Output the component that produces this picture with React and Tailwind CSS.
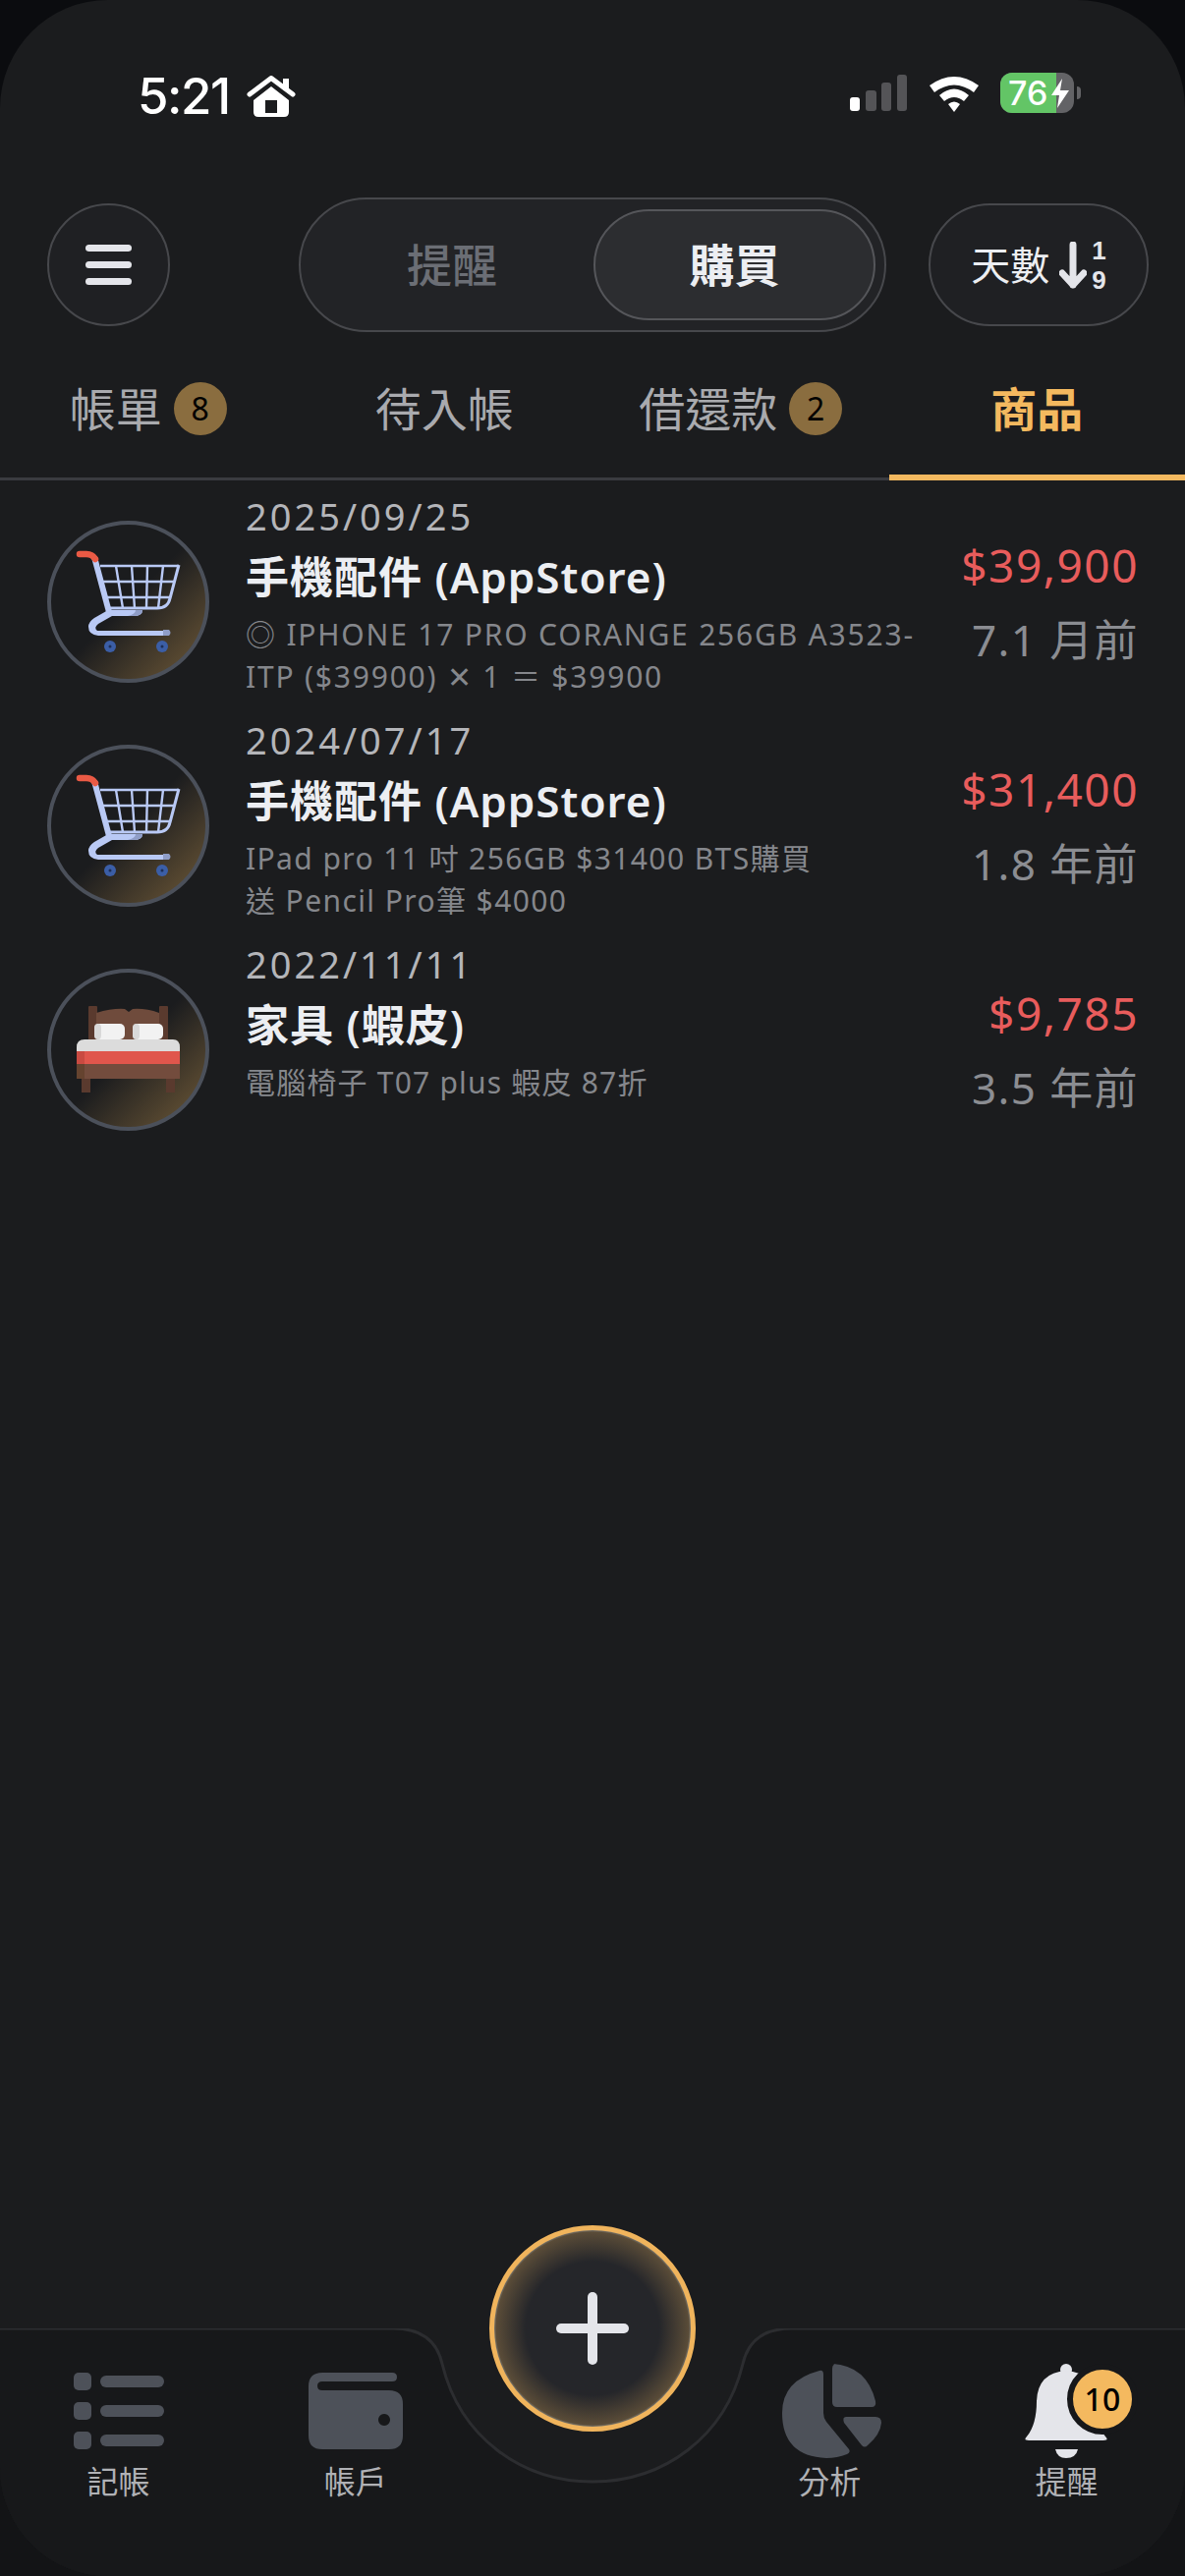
import React from 'react';

const FONT = "font-['Noto_Sans','Noto_Sans_CJK_TC',sans-serif]";

const ITEMS = [
  {
    date: '2025/09/25',
    title: '手機配件 (AppStore)',
    desc: ['◎ IPHONE 17 PRO CORANGE 256GB A3523-', 'ITP ($39900) ✕ 1 ＝ $39900'],
    descClass: 'tracking-[1.8px]',
    price: '$39,900',
    age: '7.1 月前',
    icon: 'cart',
  },
  {
    date: '2024/07/17',
    title: '手機配件 (AppStore)',
    desc: ['IPad pro 11 吋 256GB $31400 BTS購買', '送 Pencil Pro筆 $4000'],
    descClass: 'tracking-[1.4px]',
    price: '$31,400',
    age: '1.8 年前',
    icon: 'cart',
  },
  {
    date: '2022/11/11',
    title: '家具 (蝦皮)',
    desc: ['電腦椅子 T07 plus 蝦皮 87折'],
    descClass: 'tracking-[1.2px]',
    price: '$9,785',
    age: '3.5 年前',
    icon: 'bed',
  },
];

const CartIcon = () => (
  <svg viewBox="18 19 165 165" className="absolute inset-0 h-full w-full">
    <g fill="none" stroke="#b9c9f5" strokeWidth="2.4">
      <path d="M72 65H152M74 81H148M77 97H144" />
      <path d="M88 65L95 108M104 65L107 108M120 65L119 108M136 65L131 108" />
      <path d="M152 64L143 98Q141 108 130 108H80" strokeWidth="3" />
    </g>
    <path d="M66 56L81 112" fill="none" stroke="#b9c9f5" strokeWidth="6" />
    <path d="M51 53H58Q64 53 67 58" fill="none" stroke="#ea5a45" strokeWidth="6.5" strokeLinecap="round" />
    <path d="M80 110H115Q115 116 106 116H84L70 124Q65 128 69 131H140V136H70Q60 135 60 127Q60 122 66 118Z" fill="#b9c9f5" />
    <path d="M100 116H106Q115 116 115 110H108Q108 114 100 116Z" fill="#8f9dc7" />
    <path d="M136 130H142Q145 133 142 136H136Z" fill="#8f9dc7" />
    <circle cx="82" cy="147" r="6" fill="#3b5ea6" />
    <circle cx="135" cy="147" r="6" fill="#3b5ea6" />
    <circle cx="82" cy="147" r="1.5" fill="#1d2f57" />
    <circle cx="135" cy="147" r="1.5" fill="#1d2f57" />
  </svg>
);

const BedIcon = () => (
  <svg viewBox="18 16 165 165" className="absolute inset-0 h-full w-full">
    <rect x="60" y="54" width="9" height="36" rx="1" fill="#5a3a2e" />
    <rect x="132" y="54" width="9" height="36" rx="1" fill="#5a3a2e" />
    <path d="M68 61Q85 56 97 57L101 60L105 57Q118 56 132 61V90H68Z" fill="#6f4b3c" />
    <rect x="53" y="126" width="9" height="16" fill="#5a3a2e" />
    <rect x="139" y="126" width="9" height="16" fill="#5a3a2e" />
    <rect x="66" y="72" width="31" height="16" rx="5" fill="#f2f2f2" />
    <rect x="105" y="72" width="31" height="16" rx="5" fill="#f2f2f2" />
    <rect x="66" y="72" width="7" height="16" rx="4" fill="#d9d9d9" />
    <rect x="105" y="72" width="7" height="16" rx="4" fill="#d9d9d9" />
    <path d="M48 100V96Q48 88 56 88H146Q153 88 153 96V100Z" fill="#dcdcdc" />
    <rect x="48" y="100" width="105" height="13" fill="#e0564c" />
    <rect x="48" y="113" width="105" height="15" fill="#734c3d" />
    <rect x="48" y="100" width="8" height="13" fill="#c94a41" />
    <rect x="48" y="113" width="8" height="15" fill="#65432f" />
  </svg>
);

const StatusBar = () => (
  <div className="flex h-[201px] items-start justify-between pl-[140px] pr-[106px] pt-[74px]">
    <div className="flex items-center gap-[17px]">
      <span className="text-[51px] leading-[48px] font-medium tracking-[-1.5px] text-white font-['Inter',sans-serif]">5:21</span>
      <svg width="50" height="42" viewBox="0 0 50 42">
        <rect x="37" y="3" width="6" height="12" fill="#fff" />
        <path d="M3 19L25 2.5L47 19" fill="none" stroke="#fff" strokeWidth="5" strokeLinecap="round" strokeLinejoin="round" />
        <path fillRule="evenodd" d="M25 11L43 25V37Q43 42 38 42H12Q7 42 7 37V25ZM19 25V38H31V25Z" fill="#fff" />
      </svg>
    </div>
    <div className="flex items-center">
      <svg width="58" height="37" viewBox="0 0 58 37">
        <rect x="0" y="23" width="10" height="14" rx="3" fill="#fff" />
        <rect x="16" y="16" width="11" height="21" rx="3" fill="#545457" />
        <rect x="32" y="8" width="10" height="29" rx="3" fill="#545457" />
        <rect x="48" y="0" width="10" height="37" rx="3" fill="#545457" />
      </svg>
      <svg width="50" height="38" viewBox="0 0 50 38" className="ml-[23px]">
        <path d="M0 11Q25 -7 50 11L45 18Q25 3 5 18Z" fill="#fff" />
        <path d="M10 21Q25 8 40 21L35 27Q25 19 15 27Z" fill="#fff" />
        <path d="M19 30Q25 25 31 30L25 38Z" fill="#fff" />
      </svg>
      <div className="relative ml-[22px] flex h-[41px] w-[75px] items-center overflow-hidden rounded-[12px] bg-[#636366]">
        <div className="flex h-full w-[57px] items-center bg-[#63c566] pl-[8px] text-[34px] leading-none font-medium text-white font-['Inter',sans-serif]">76</div>
        <svg width="18" height="30" viewBox="0 0 18 30" className="absolute left-[52px] top-[6px]">
          <path d="M11 0L0 17H8L6 30L18 12H9Z" fill="#fff" />
        </svg>
      </div>
      <div className="ml-[3px] h-[13px] w-[4px] rounded-r-full bg-[#636366]" />
    </div>
  </div>
);

const TopControls = () => (
  <div className="flex h-[137px] items-center pl-[48px]">
    <div className="flex h-[125px] w-[125px] flex-col items-center justify-center gap-[10px] rounded-full border-2 border-[#47484c] bg-[#1f2023]">
      <div className="h-[7px] w-[47px] rounded-full bg-[#e4e5ea]" />
      <div className="h-[7px] w-[47px] rounded-full bg-[#e4e5ea]" />
      <div className="h-[7px] w-[47px] rounded-full bg-[#e4e5ea]" />
    </div>
    <div className="ml-[131px] flex h-[137px] w-[598px] items-center rounded-full border-2 border-[#47484c] bg-[#222326] pl-[10px] pr-[9px]">
      <div className="flex-1 text-center text-[46px] font-medium text-[#6b6e75]">提醒</div>
      <div className="flex h-[113px] w-[287px] items-center justify-center rounded-full border-2 border-[#55565a] bg-[#2c2d30] text-[46px] font-bold text-[#eceef2]">購買</div>
    </div>
    <div className="ml-[43px] flex h-[125px] w-[224px] items-center justify-center rounded-full border-2 border-[#47484c] bg-[#1f2023]">
      <span className="text-[40px] leading-none text-[#eceef2]">天數</span>
      <svg width="28" height="48" viewBox="0 0 28 48" className="ml-[10px]">
        <path d="M14 3V44M3 32L14 44L25 32" fill="none" stroke="#e4e5ea" strokeWidth="7" strokeLinecap="round" strokeLinejoin="round" />
      </svg>
      <div className="ml-[5px] flex flex-col items-center text-[26px] leading-[30px] font-bold text-[#e4e5ea] font-['Liberation_Sans',sans-serif]">
        <span>1</span>
        <span>9</span>
      </div>
    </div>
  </div>
);

const Badge = ({ n }) => (
  <span className="ml-[12px] flex h-[54px] w-[54px] items-center justify-center rounded-full bg-[#8a6d3f] text-[32px] leading-none text-black">{n}</span>
);

const Tabs = () => (
  <div className="mt-[8px] grid h-[143px] grid-cols-4 border-b-[3px] border-[#3a3b40]">
    <div className="flex items-center justify-center text-[47px] text-[#a9aaae]">帳單<Badge n="8" /></div>
    <div className="flex items-center justify-center text-[47px] text-[#a9aaae]">待入帳</div>
    <div className="flex items-center justify-center text-[47px] text-[#a9aaae]">借還款<Badge n="2" /></div>
    <div className="relative flex items-center justify-center text-[47px] font-bold text-[#f4b95f]">
      商品
      <div className="absolute -bottom-[3px] left-0 right-0 h-[6px] bg-[#f4b95f]" />
    </div>
  </div>
);

const Row = ({ item }) => (
  <div className="flex h-[228px]">
    <div className="w-[250px] shrink-0 pl-[48px] pt-[27px]">
      <div className="relative h-[165px] w-[165px] rounded-full border-[4px] border-[#4b505a] bg-linear-to-br from-transparent from-50% to-[#705a38]">
        <div className="absolute -inset-[4px]">{item.icon === 'cart' ? <CartIcon /> : <BedIcon />}</div>
      </div>
    </div>
    <div className="flex-1">
      <div className="h-[47px] text-[38px] leading-[44px] tracking-[3px] text-[#b4b5b9]">{item.date}</div>
      <div className="mt-[5px] h-[64px] text-[44px] leading-[64px] tracking-[1px] font-semibold text-[#eceef2]">{item.title}</div>
      <div className={`mt-[5px] text-[30px] leading-[43px] text-[#85878c] ${item.descClass}`}>
        {item.desc.map((line) => (
          <div key={line} className="whitespace-nowrap">{line}</div>
        ))}
      </div>
    </div>
    <div className="flex w-[200px] shrink-0 flex-col items-end pr-[47px] pt-[41px]">
      <div className="h-[62px] text-[46px] leading-[62px] tracking-[1.5px] text-[#e85c5c] whitespace-nowrap">{item.price}</div>
      <div className="mt-[14px] text-[44px] leading-[62px] tracking-[1.4px] text-[#8b8d92] whitespace-nowrap">{item.age}</div>
    </div>
  </div>
);

const ListIcon = () => (
  <svg width="92" height="78" viewBox="0 0 92 78" fill="#4d5159">
    <rect x="0" y="0" width="18" height="18" rx="5" />
    <rect x="0" y="30" width="18" height="18" rx="5" />
    <rect x="0" y="60" width="18" height="18" rx="5" />
    <rect x="27" y="3" width="65" height="12" rx="6" />
    <rect x="27" y="33" width="65" height="12" rx="6" />
    <rect x="27" y="63" width="65" height="12" rx="6" />
  </svg>
);

const WalletIcon = () => (
  <svg width="96" height="78" viewBox="0 0 96 78" fill="#4d5159">
    <path fillRule="evenodd" d="M14 0H85Q90 0 90 4.5Q90 9 85 9H14Q9 9 9 13.5Q9 18 14 18H82Q96 18 96 32V64Q96 78 82 78H14Q0 78 0 64V14Q0 0 14 0ZM77 42a6 6 0 1 0 0.01 0Z" />
  </svg>
);

const PieIcon = () => (
  <svg width="101" height="96" viewBox="0 0 101 96" fill="#4d5159" className="ml-[5px]">
    <path d="M38 7Q42 6 42 11V50Q42 55 45 59L68 87Q70 90 66 92Q56 96 45 96Q0 94 0 50Q0 17 38 7Z" />
    <path d="M51 0Q86 2 95 38Q96 44 91 44H56Q51 44 51 39V5Q51 0 56 0Z" />
    <path d="M65 54H95Q101 54 101 60Q100 72 87 83Q84 86 81 83L63 60Q61 54 65 54Z" />
  </svg>
);

const BellIcon = () => (
  <svg width="85" height="96" viewBox="0 0 85 96" fill="#e4e5ea">
    <circle cx="42" cy="6" r="6" />
    <path d="M42 7Q13 9 12 38Q12 62 2 74Q-2 78 4 78H80Q86 78 82 74Q72 62 72 38Q71 9 42 7Z" />
    <path d="M31 87H54Q52 96 42 96Q33 96 31 87Z" />
  </svg>
);

const NavItem = ({ label, children }) => (
  <div className="flex flex-col items-center pt-[36px]">
    <div className="relative flex h-[96px] items-center justify-center">{children}</div>
    <div className="mt-[4px] text-[32px] leading-[40px] text-[#b0b1b5]">{label}</div>
  </div>
);

const BottomNav = () => (
  <div className="relative h-[252px]">
    <svg viewBox="0 0 1206 252" className="absolute inset-0 h-full w-full">
      <path
        d="M-5 0H400Q442 0 450 36C468 110 530 156 603 156C676 156 738 110 756 36Q764 0 806 0H1211V260H-5Z"
        fill="#17181a"
        stroke="#2c2d30"
        strokeWidth="3"
      />
    </svg>
    <div className="absolute left-[498px] -top-[105px] flex h-[210px] w-[210px] items-center justify-center rounded-full border-[5px] border-[#f0b45c] bg-[radial-gradient(circle_closest-side,#25262a_68%,#5a4c38_98%,#77746c_100%)]">
      <svg width="74" height="74" viewBox="0 0 74 74" fill="#e4e5ea">
        <rect x="0" y="32" width="74" height="10" rx="5" />
        <rect x="32" y="0" width="10" height="74" rx="5" />
      </svg>
    </div>
    <div className="relative grid grid-cols-5">
      <NavItem label="記帳"><ListIcon /></NavItem>
      <NavItem label="帳戶"><WalletIcon /></NavItem>
      <div />
      <NavItem label="分析"><PieIcon /></NavItem>
      <NavItem label="提醒">
        <BellIcon />
        <span className="absolute -right-[30px] top-0 flex h-[72px] w-[72px] items-center justify-center rounded-full border-[6px] border-[#17181a] bg-[#f4b95f] text-[32px] leading-none font-medium text-black">10</span>
      </NavItem>
    </div>
  </div>
);

export default function App() {
  return (
    <div className={`h-[2622px] w-[1206px] bg-[linear-gradient(#0b0c0f_50%,#131416_50%)] ${FONT}`}>
      <div className="flex h-full flex-col overflow-hidden rounded-[110px] bg-[#1b1c1e]">
        <StatusBar />
        <TopControls />
        <Tabs />
        <div className="flex-1 pt-[14px]">
          {ITEMS.map((item) => (
            <Row key={item.date} item={item} />
          ))}
        </div>
        <BottomNav />
      </div>
    </div>
  );
}
